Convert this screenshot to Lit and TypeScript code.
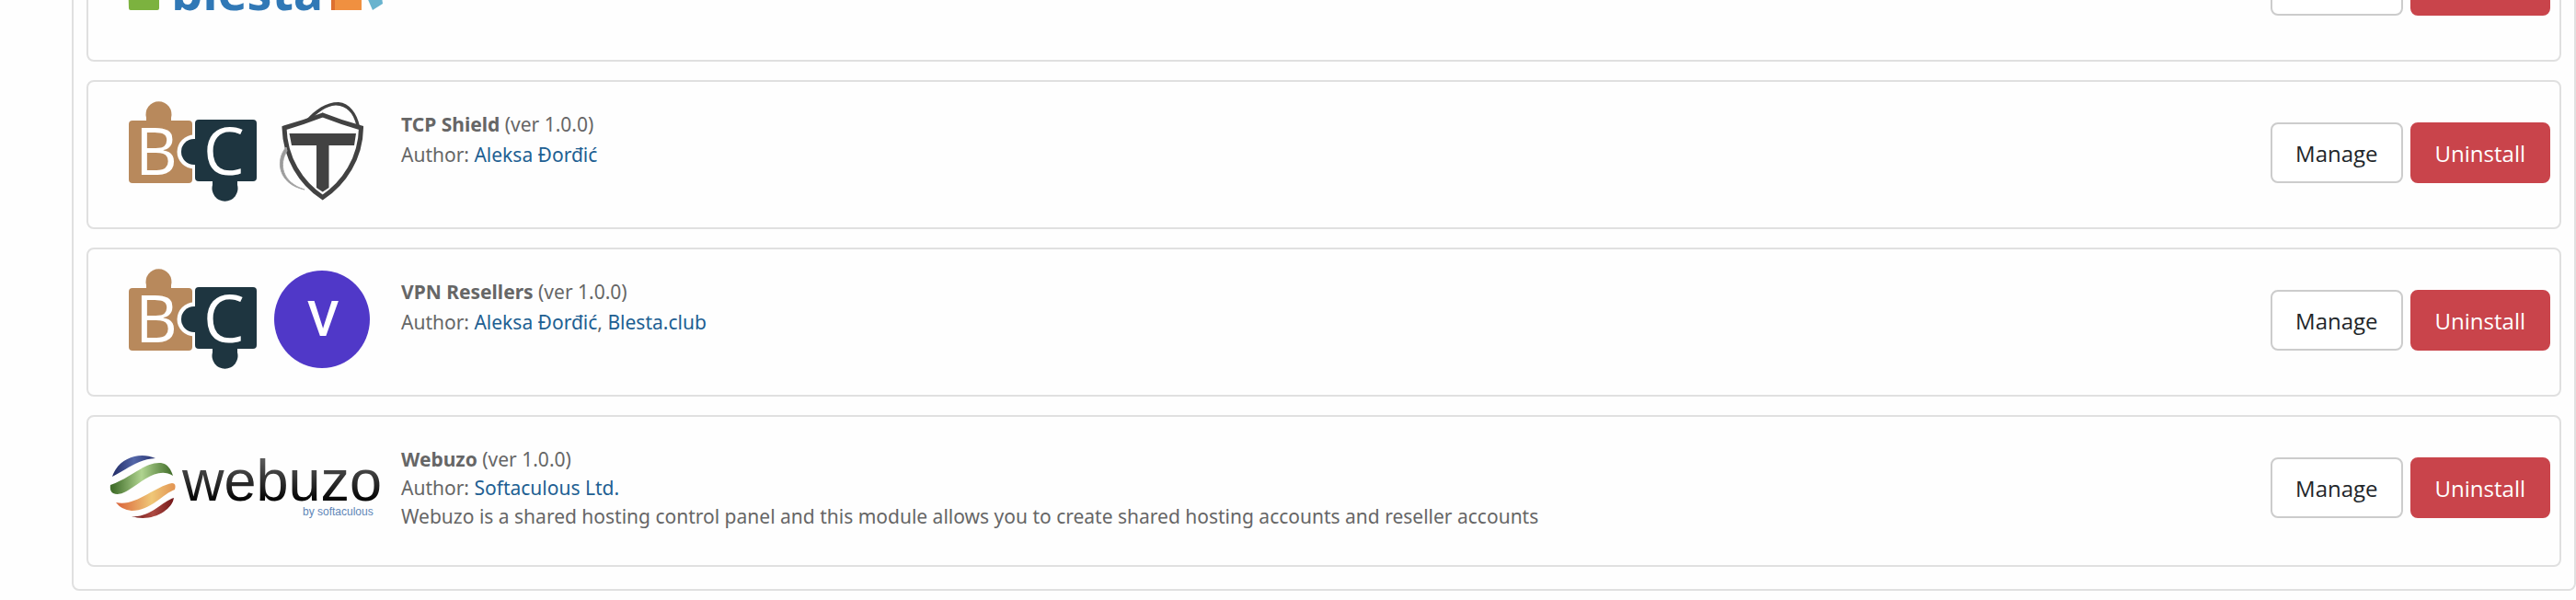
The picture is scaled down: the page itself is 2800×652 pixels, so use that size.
import { LitElement, html, css, svg, nothing, TemplateResult } from "lit";
import { customElement, property } from "lit/decorators.js";

interface Author {
  name: string;
  url: string;
}

interface ModuleInfo {
  logo: "blesta" | "tcpshield" | "vpn" | "webuzo";
  name?: string;
  version?: string;
  authors?: Author[];
  description?: string;
}

const puzzle = svg`
  <rect x="140" y="131" width="69" height="68" rx="4" fill="#b8895c" />
  <path d="M159 134 V128 A14 14 0 1 1 186 128 V134 Z" fill="#b8895c" />
  <circle cx="211" cy="165" r="18.500" fill="#fefefe" />
  <rect x="209" y="128" width="7" height="74" fill="#fefefe" />
  <rect x="212" y="130" width="67" height="67" rx="4" fill="#1e3540" />
  <path d="M216 151 H211 A14 14 0 1 0 211 179 H216 Z" fill="#1e3540" />
  <path d="M231 195 V201 A14 14 0 1 0 258 201 V195 Z" fill="#1e3540" />
  <text x="147" y="190" class="puzzle">B</text>
  <text x="221" y="190" class="puzzle">C</text>`;

const logos: Record<ModuleInfo["logo"], TemplateResult> = {
  blesta: html`<svg class="logo" viewBox="116 -77 300 126" role="img" aria-label="Blesta">
    <path d="M139 -24 H173 V9 Q173 11 171 11 H142 Q140 11 140 9 Z" fill="#7cb23f" />
    <text x="186" y="11" class="blesta">blesta</text>
    <path d="M360 -24 H393 V11 H360 Z" fill="#f09040" />
    <path d="M360 -24 H364 V11 H360 Z" fill="#dd7030" />
    <path d="M395 -12 L414 -10 L416 4 L405 11 Z" fill="#68b3ce" />
  </svg>`,
  tcpshield: html`<svg class="logo" viewBox="116 105 300 126" role="img" aria-label="TCP Shield">
    ${puzzle}
    <path
      d="M309 139 Q330 133 350.7 125 Q371 133 392.500 139 C392 172 374 199 350.7 214.500 C327 199 310 172 309 139 Z"
      fill="none" stroke="#424242" stroke-width="5" />
    <path
      d="M314.500 145 H387 L385 158 H357.500 V204 L350.7 208.500 L344 204 V158 H317 Z"
      fill="#424242" />
    <path d="M332 131 C343 119 354 111 368 111 C380 112 388 123 391 137 L387 135 C384 123 377 115 365 114.500 C354 115 345 123 339 129 Z" fill="#424242" />
    <path d="M311 160 C299 174 302 200 331 206 C306 198 303 178 312 164 Z" fill="#9a9a9a" stroke="#a8a8a8" stroke-width="1" />
  </svg>`,
  vpn: html`<svg class="logo" viewBox="116 105 300 126" role="img" aria-label="VPN Resellers">
    ${puzzle}
    <ellipse cx="350" cy="165" rx="52" ry="53" fill="#5038c8" />
    <text x="351" y="183" class="vee">V</text>
  </svg>`,
  webuzo: html`<svg class="logo" viewBox="116 469 300 126" role="img" aria-label="Webuzo">
    <defs>
      <linearGradient id="ink" x1="0" y1="499" x2="0" y2="545" gradientUnits="userSpaceOnUse">
        <stop offset="0" stop-color="#5a5a5a" /><stop offset="0.6" stop-color="#262626" /><stop offset="1" stop-color="#000" />
      </linearGradient>
      <linearGradient id="blue"><stop offset="0" stop-color="#222c66" /><stop offset="0.5" stop-color="#5366a8" /><stop offset="1" stop-color="#27326f" /></linearGradient>
      <linearGradient id="green"><stop offset="0.05" stop-color="#43702c" /><stop offset="0.5" stop-color="#b0d490" /><stop offset="1" stop-color="#3f6b28" /></linearGradient>
      <linearGradient id="orange"><stop offset="0" stop-color="#da6238" /><stop offset="0.6" stop-color="#efc777" /><stop offset="1" stop-color="#e29352" /></linearGradient>
      <linearGradient id="red"><stop offset="0" stop-color="#6e1719" /><stop offset="0.5" stop-color="#ad4a42" /><stop offset="1" stop-color="#731719" /></linearGradient>
    </defs>
    <path d="M122 518 C128 499 150 490 169 498 C150 499 138 510 122 518 Z" fill="url(#blue)" />
    <path d="M120 527 C143 519 156 503 173 503 C181 503 185 508 188 517 C172 507 155 523 142 531 C133 537 128 538 123 536 Q119 534 120 527 Z" fill="url(#green)" />
    <path d="M126 546 C147 551 167 529 187 525 Q192 525 190 532 C178 536 164 555 143 555 Q132 554 126 546 Z" fill="url(#orange)" />
    <path d="M143 561 C163 563 176 545 189 541 C187 555 164 568 143 561 Z" fill="url(#red)" />
    <text x="198" y="544" class="webuzo">webuzo</text>
    <text x="329" y="560" class="byline">by softaculous</text>
  </svg>`,
};

@customElement("module-card")
class ModuleCard extends LitElement {
  @property({ attribute: false }) module!: ModuleInfo;

  static styles = css`
    :host {
      display: flex;
      align-items: flex-start;
      gap: 20px;
      box-sizing: border-box;
      padding: 16px 10px 16px 20px;
      border: 2px solid #e0e0e0;
      border-radius: 8px;
      background: #fefefe;
    }
    .logo {
      display: block;
      flex: none;
      width: 300px;
      height: 126px;
    }
    .puzzle {
      font: 400 71px "Open Sans", sans-serif;
      fill: #fff;
    }
    .blesta {
      font: 700 54px "Open Sans", sans-serif;
      fill: #3078b6;
    }
    .vee {
      font: 500 53px Roboto, sans-serif;
      fill: #fff;
      text-anchor: middle;
    }
    .webuzo {
      font: 63px "Liberation Sans", sans-serif;
      fill: url(#ink);
    }
    .byline {
      font: 12px "Liberation Sans", sans-serif;
      fill: #5f86b8;
    }
    .info {
      flex: 1;
      min-width: 0;
      padding: 15px 0 21px;
      font-size: 21px;
      line-height: 31px;
      color: #666;
    }
    .line {
      margin: 0;
    }
    .line.tall {
      line-height: 35px;
    }
    a.author {
      color: #215f92;
      text-decoration: none;
    }
    .actions {
      display: flex;
      flex: none;
      gap: 8px;
      margin: 28px 0 0 auto;
    }
    .btn {
      height: 66px;
      padding: 0 25px;
      border: 2px solid #ccc;
      border-radius: 8px;
      background: #fff;
      color: #212529;
      font-family: "Open Sans", sans-serif;
      font-size: 24px;
      cursor: pointer;
    }
    .btn.danger {
      border-color: #c9444b;
      background: #c9444b;
      color: #fff;
    }
  `;

  render() {
    const m = this.module;
    return html`
      ${logos[m.logo]}
      ${m.name
        ? html`<div class="info">
            <p class="line"><strong>${m.name}</strong> (ver ${m.version})</p>
            <p class="line ${m.description ? "" : "tall"}">
              Author:
              ${m.authors!.map(
                (a, i) => html`${i ? ", " : nothing}<a class="author" href=${a.url}>${a.name}</a>`
              )}
            </p>
            ${m.description ? html`<p class="line">${m.description}</p>` : nothing}
          </div>`
        : nothing}
      <div class="actions">
        <button class="btn" type="button">Manage</button>
        <button class="btn danger" type="button">Uninstall</button>
      </div>
    `;
  }
}

@customElement("app-root")
class AppRoot extends LitElement {
  static styles = css`
    :host {
      display: flow-root;
      min-height: 100vh;
      box-sizing: border-box;
      overflow: hidden;
      background: #fefefe;
      font-family: "Noto Sans", "Open Sans", sans-serif;
    }
    .panel {
      display: flex;
      flex-direction: column;
      gap: 20px;
      margin: -111px 0 10px 78px;
      padding: 14px 14px 24px;
      border: 2px solid #e0e0e0;
      border-radius: 8px;
    }
  `;

  private modules: ModuleInfo[] = [
    { logo: "blesta" },
    {
      logo: "tcpshield",
      name: "TCP Shield",
      version: "1.0.0",
      authors: [{ name: "Aleksa Đorđić", url: "#aleksa" }],
    },
    {
      logo: "vpn",
      name: "VPN Resellers",
      version: "1.0.0",
      authors: [
        { name: "Aleksa Đorđić", url: "#aleksa" },
        { name: "Blesta.club", url: "#blesta-club" },
      ],
    },
    {
      logo: "webuzo",
      name: "Webuzo",
      version: "1.0.0",
      authors: [{ name: "Softaculous Ltd.", url: "#softaculous" }],
      description:
        "Webuzo is a shared hosting control panel and this module allows you to create shared hosting accounts and reseller accounts",
    },
  ];

  render() {
    return html`<main class="panel">
      ${this.modules.map((m) => html`<module-card .module=${m}></module-card>`)}
    </main>`;
  }
}
